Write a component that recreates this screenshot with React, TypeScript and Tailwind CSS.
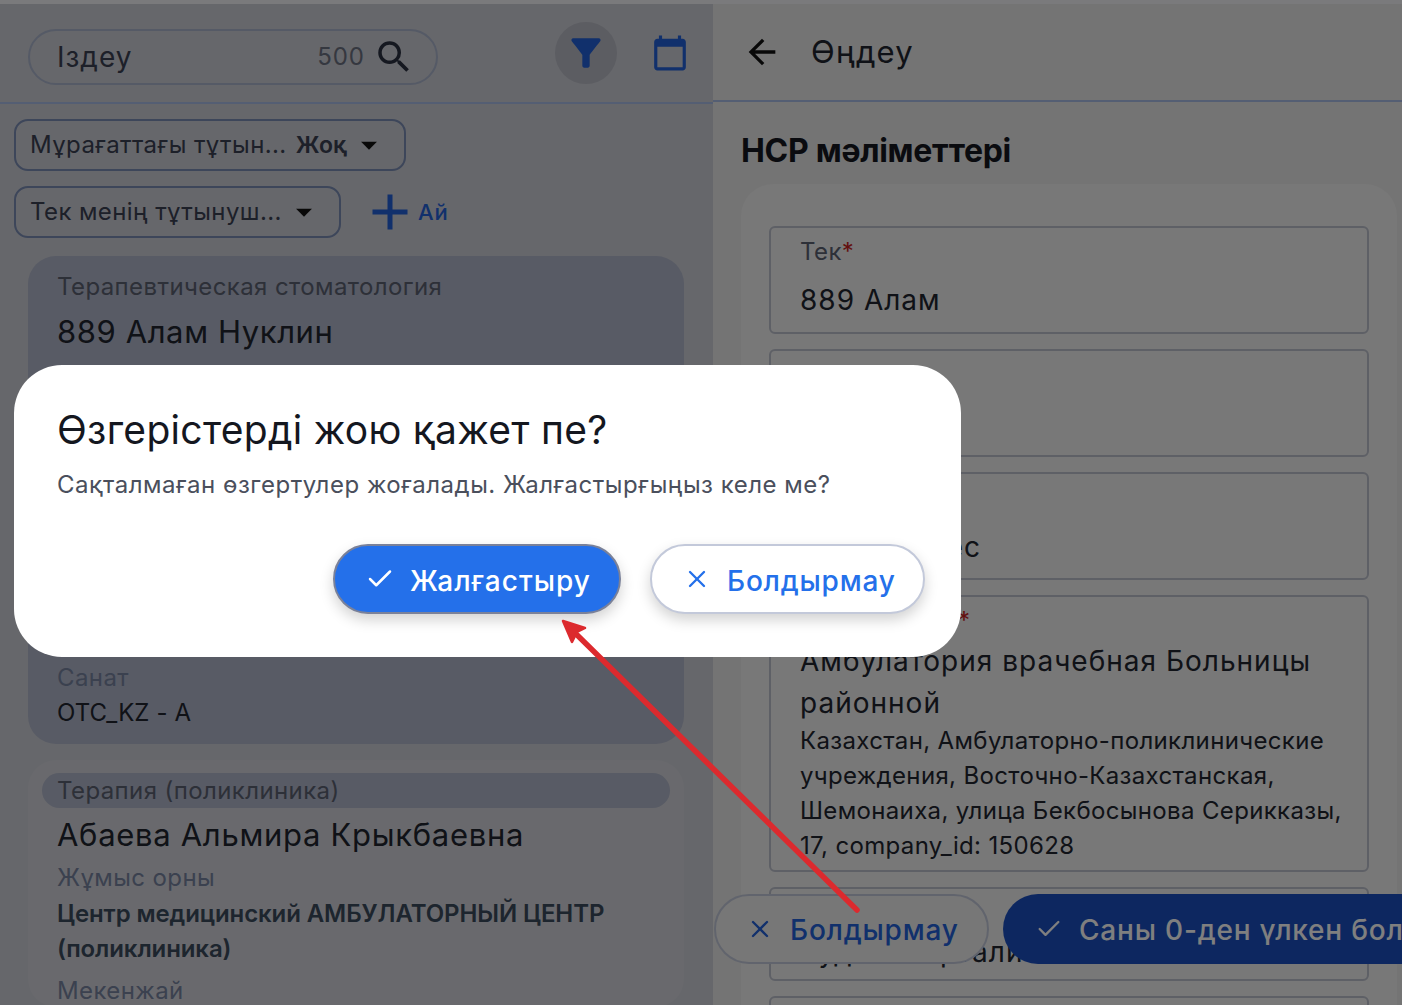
import { Check, X } from "lucide-react";
import {
  MdAdd,
  MdArrowBack,
  MdArrowDropDown,
  MdCalendarToday,
  MdFilterAlt,
  MdSearch,
} from "react-icons/md";

function FilterSelect({ children, width }: { children: React.ReactNode; width: string }) {
  return (
    <div className={`flex h-[52px] items-center rounded-[14px] border-2 border-[#7a8cb4] pl-[14px] text-[24px] tracking-[0.4px] text-[#3a4052] ${width}`}>
      {children}
      <MdArrowDropDown className="ml-[3px] text-[#111] shrink-0" size={38} />
    </div>
  );
}

function Field({
  label,
  value,
  className,
  valueTop = "mt-[11px]",
}: {
  label: string;
  value: string;
  className: string;
  valueTop?: string;
}) {
  return (
    <div className={`rounded-[6px] border-2 border-[#bcc0cc] px-[29px] pt-[8px] ${className}`}>
      <div className="text-[24px] leading-[32px] tracking-[0.4px] text-[#5a6070]">
        {label}
        <span className="text-[#c81e1e]">*</span>
      </div>
      <div className={`${valueTop} text-[28px] leading-[42px] tracking-[1px] text-[#20242e]`}>{value}</div>
    </div>
  );
}

export default function App() {
  return (
    <div className="relative flex h-screen w-full overflow-hidden bg-[#f4f4f8] pt-[4px] font-['Inter',sans-serif]">
      {/* left list */}
      <div className="h-full w-[713px] shrink-0 bg-[#ccced6]">
        <div className="flex h-[100px] items-center border-b-2 border-[#a9bde6] pl-[28px] pr-[24px]">
          <div className="mt-[7px] flex h-[56px] w-[410px] items-center rounded-full border-2 border-[#aab4cc] pl-[27px] pr-[21px]">
            <span className="text-[28px] tracking-[1px] text-[#3a4052]">Іздеу</span>
            <span className="ml-auto text-[24px] tracking-[1px] text-[#6b7080]">500</span>
            <MdSearch className="ml-[8px] text-[#2a3040]" size={42} />
          </div>
          <div className="ml-auto flex h-[62px] w-[62px] items-center justify-center rounded-full bg-[#b8bac4]">
            <MdFilterAlt className="text-[#2260d8]" size={44} />
          </div>
          <MdCalendarToday className="ml-[34px] text-[#2260d8]" size={38} />
        </div>

        <div className="flex flex-col gap-[15px] px-[14px] pt-[15px]">
          <FilterSelect width="w-[392px]">
            <span className="whitespace-nowrap">
              Мұрағаттағы тұтын... <b className="ml-[2px] text-[23px] font-semibold tracking-[0]">Жоқ</b>
            </span>
          </FilterSelect>
          <div className="flex h-[52px] items-center">
            <FilterSelect width="w-[327px]">
              <span className="whitespace-nowrap">Тек менің тұтынуш...</span>
            </FilterSelect>
            <MdAdd className="ml-[19px] text-[#2260d8]" size={60} />
            <span className="-ml-[2px] text-[22px] font-medium tracking-[1px] text-[#2260d8]">Ай</span>
          </div>
        </div>

        <div className="ml-[28px] mr-[29px] mt-[18px] h-[488px] rounded-[28px] bg-[#b0b6ca] px-[29px] pt-[15px]">
          <div className="text-[24px] leading-[32px] tracking-[0.4px] text-[#5a6070]">Терапевтическая стоматология</div>
          <div className="mt-[8px] text-[31px] leading-[42px] tracking-[0.6px] text-[#20242e]">889 Алам Нуклин</div>
          <div className="mt-[309px] text-[24px] leading-[32px] tracking-[0.4px] text-[#76829f]">Санат</div>
          <div className="mt-[3px] text-[24px] leading-[32px] tracking-[0.1px] text-[#20242e]">OTC_KZ - A</div>
        </div>

        <div className="ml-[28px] mr-[29px] mt-[16px] rounded-[28px] bg-[#d2d3da] px-[14px] pt-[13px]">
          <div className="flex h-[35px] items-center rounded-full bg-[#b0b6ca] px-[15px] text-[24px] tracking-[0.4px] text-[#5a6070]">
            Терапия (поликлиника)
          </div>
          <div className="mt-[6px] px-[15px] text-[31px] leading-[42px] tracking-[0.7px] text-[#20242e]">Абаева Альмира Крыкбаевна</div>
          <div className="mt-[6px] px-[15px] text-[24px] leading-[32px] tracking-[0.4px] text-[#76829f]">Жұмыс орны</div>
          <div className="mt-[2px] px-[15px] text-[24px] font-semibold leading-[35px] tracking-[-0.1px] text-[#3a4a5c]">
            Центр медицинский АМБУЛАТОРНЫЙ ЦЕНТР (поликлиника)
          </div>
          <div className="mt-[9px] px-[15px] text-[24px] leading-[32px] tracking-[0.4px] text-[#76829f]">Мекенжай</div>
        </div>
      </div>

      {/* right form */}
      <div className="relative h-full flex-1 bg-[#e8e8e8]">
        <div className="flex h-[98px] items-center border-b-2 border-[#a9bde6] pl-[29px]">
          <MdArrowBack className="text-[#111]" size={40} />
          <span className="ml-[29px] text-[31px] tracking-[1.2px] text-[#20242e]">Өңдеу</span>
        </div>
        <h2 className="mt-[29px] pl-[28px] text-[32px] font-bold leading-[40px] tracking-[-0.3px] text-[#14171f]">HCP мәліметтері</h2>
        <div className="ml-[28px] mr-[5px] mt-[13px] rounded-t-[32px] bg-[#f0f0f0] px-[28px] pt-[42px]">
          <div className="flex flex-col gap-[15px]">
            <Field label="Тек" value="889 Алам" className="h-[108px]" />
            <div className="h-[108px] rounded-[6px] border-2 border-[#bcc0cc]" />
            <Field label="Мамандық" value="Кәсіп: кеңес" className="h-[108px]" valueTop="mt-[12px]" />
            <div className="h-[277px] rounded-[6px] border-2 border-[#bcc0cc] pl-[29px] pr-[10px] pt-[8px]">
              <div className="text-[24px] leading-[32px] tracking-[0.4px] text-[#5a6070]">
                Жұмыс орны<span className="text-[#c81e1e]">*</span>
              </div>
              <div className="mt-[3px] text-[28px] leading-[42px] tracking-[1px] text-[#20242e]">Амбулатория врачебная Больницы районной</div>
              <div className="-mt-px text-[24px] leading-[35px] tracking-[0.35px] text-[#20242e]">
                Казахстан, Амбулаторно-поликлинические учреждения, Восточно-Казахстанская, Шемонаиха, улица Бекбосынова Серикказы, 17, company_id: 150628
              </div>
            </div>
            <Field label="Сала" value="Аудан: портали" className="h-[94px]" valueTop="mt-[2px]" />
            <div className="h-[100px] rounded-[6px] border-2 border-[#bcc0cc]" />
          </div>
        </div>

        {/* floating actions */}
        <div className="absolute bottom-[41px] left-[1px] flex gap-[14px] whitespace-nowrap">
          <div className="flex h-[70px] w-[275px] shrink-0 items-center rounded-full border-2 border-[#c3c9da] bg-[#eeeeee] pl-[30px] text-[#2260d8]">
            <X className="shrink-0" size={28} strokeWidth={2} />
            <span className="ml-[16px] pt-[2px] text-[28px] font-medium tracking-[0.8px]">Болдырмау</span>
          </div>
          <div className="flex h-[70px] w-[560px] shrink-0 items-center rounded-full bg-[#1a4ec0] pl-[32px] text-white">
            <Check className="shrink-0" size={28} strokeWidth={2} />
            <span className="ml-[16px] pt-[2px] text-[28px] font-medium tracking-[0.8px]">Саны 0-ден үлкен болуы керек</span>
          </div>
        </div>
      </div>

      {/* scrim */}
      <div className="absolute inset-0 bg-black/50" />

      {/* dialog */}
      <div className="absolute left-[14px] top-[365px] flex h-[292px] w-[947px] flex-col rounded-[48px] bg-white pl-[43px] pr-[36px] pt-[43px]">
        <h1 className="text-[39px] font-normal leading-[44px] tracking-[0.3px] text-[#14171f]">Өзгерістерді жою қажет пе?</h1>
        <p className="mt-[17px] text-[24px] leading-[32px] tracking-[0.52px] text-[#4a4f5c]">
          Сақталмаған өзгертулер жоғалады. Жалғастырғыңыз келе ме?
        </p>
        <div className="mt-[43px] flex justify-end gap-[29px]">
          <div className="flex h-[70px] w-[288px] items-center rounded-full border-2 border-[#7a8199] bg-[#2470ea] pl-[30px] text-white shadow-[0_6px_14px_rgba(0,0,0,0.18)]">
            <Check size={30} strokeWidth={2} />
            <span className="ml-[15px] pt-[3px] text-[28px] font-medium tracking-[1px]">Жалғастыру</span>
          </div>
          <div className="flex h-[70px] w-[275px] items-center rounded-full border-2 border-[#c3c9da] bg-white pl-[31px] text-[#2470ea] shadow-[0_6px_14px_rgba(0,0,0,0.18)]">
            <X size={28} strokeWidth={2} />
            <span className="ml-[16px] pt-[3px] text-[28px] font-medium tracking-[0.8px]">Болдырмау</span>
          </div>
        </div>
      </div>

      {/* annotation arrow */}
      <svg className="pointer-events-none absolute inset-0" width="1402" height="1005" viewBox="0 0 1402 1005" fill="none">
        <path d="M857 910 L572 630" stroke="#dc2a2e" strokeWidth="5.5" strokeLinecap="round" />
        <path d="M563 621 L585 628 L577 632 L572 642 Z" fill="#dc2a2e" stroke="#dc2a2e" strokeWidth="2.5" strokeLinejoin="round" />
      </svg>
    </div>
  );
}
